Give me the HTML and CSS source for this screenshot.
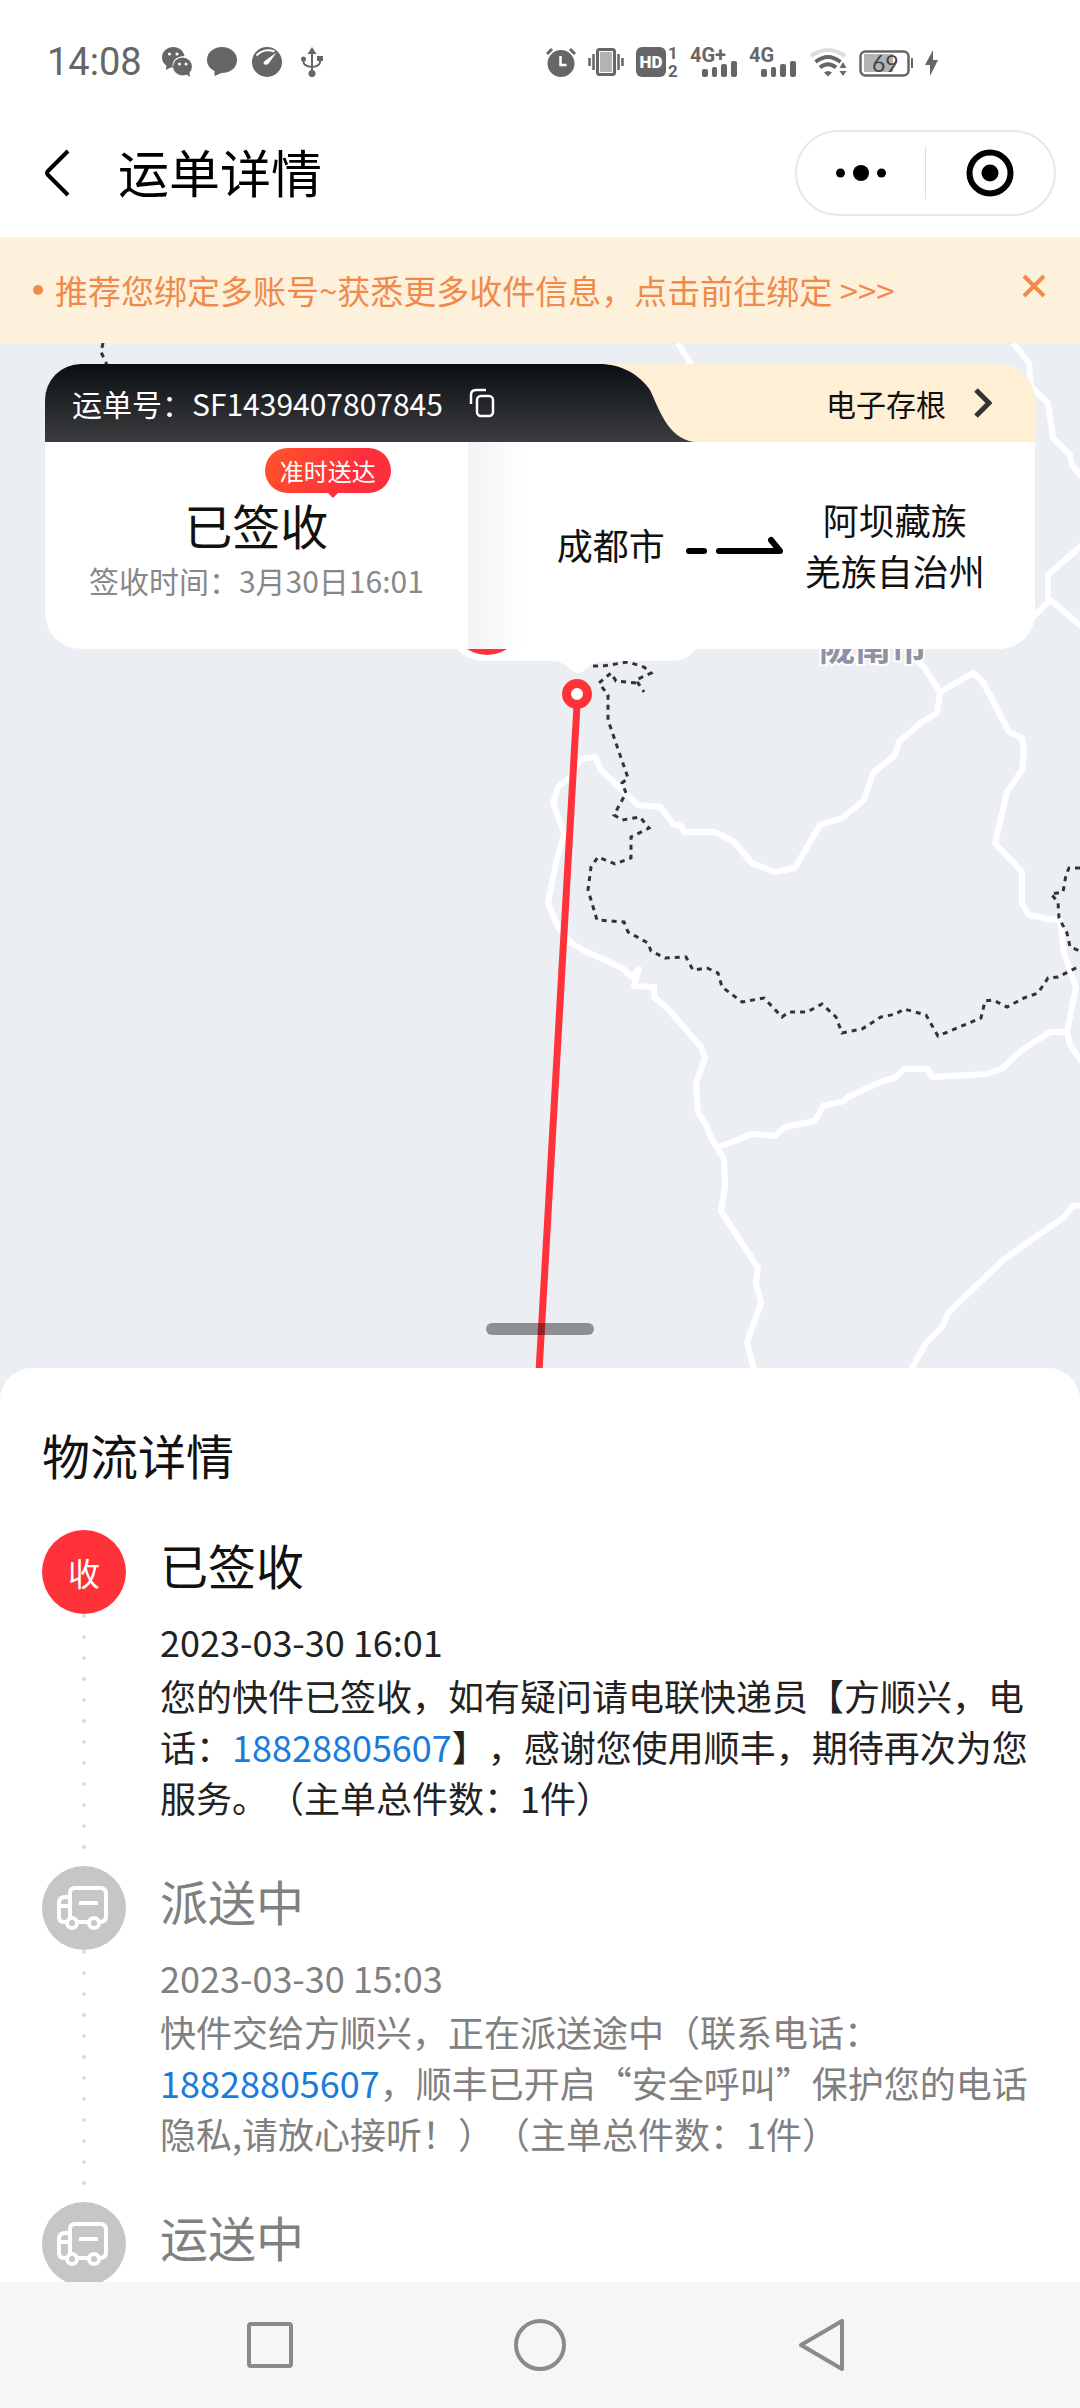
FILE: index.html
```html
<!DOCTYPE html>
<html lang="zh-CN">
<head>
    <meta charset="UTF-8">
    <meta name="viewport" content="width=device-width, initial-scale=1.0">
    <title>运单详情</title>
    <link rel="stylesheet" href="styles.css">
</head>
<body>
    <div class="status-bar">
        <div class="status-left">
            <span class="clock">14:08</span>
            <svg width="30" height="30" viewBox="0 0 30 30" fill="#666">
                <path d="M11.500 0C5 0 0 4.500 0 10.500c0 3.500 1.700 6.300 4.500 8.200L3.800 23l5-2.600 2 .3C9.500 14 14.500 9 22.500 9 21.500 3.800 17 0 11.500 0z"/>
                <ellipse cx="20.500" cy="19.500" rx="9.500" ry="9"/>
                <path d="M24 27l4 3-.8-6z"/>
                <circle cx="7.500" cy="7" r="1.600" fill="#fff"/>
                <circle cx="15" cy="7" r="1.600" fill="#fff"/>
                <circle cx="17.500" cy="17" r="1.500" fill="#fff"/>
                <circle cx="24" cy="17" r="1.500" fill="#fff"/>
            </svg>
            <svg width="30" height="30" viewBox="0 0 30 30" fill="#666">
                <path d="M15 0C6.500 0 0 5.500 0 13c0 5 2.800 8.500 7.500 11v5l7-3C24 26 30 20.500 30 13S23.500 0 15 0z"/>
            </svg>
            <svg width="30" height="30" viewBox="0 0 30 30">
                <circle cx="15" cy="15" r="15" fill="#666"/>
                <path d="M4.500 8.500C9 3.500 16 2 22.500 4.500" fill="none" stroke="#fff" stroke-width="2"/>
                <path d="M24.500 5.500L12 14.500c-1.500 3 1.500 4.500 4.500 2.300z" fill="#fff"/>
            </svg>
            <svg class="usb" width="22" height="30" viewBox="0 0 22 30" fill="#666">
                <path d="M11 0l4.500 7h-9z"/>
                <circle cx="11" cy="26.500" r="3.500"/>
                <circle cx="2.500" cy="12" r="2.500"/>
                <path d="M16 9h6v5h-6z"/>
                <path d="M11 5v20M2.500 12v3q0 4 8.500 5M19 12v3q0 4-8 5" fill="none" stroke="#666" stroke-width="2"/>
            </svg>
        </div>
        <div class="status-right">
            <svg width="30" height="30" viewBox="0 0 30 30">
                <circle cx="15" cy="16.500" r="13.500" fill="#666"/>
                <path d="M1 7l5-5M29 7l-5-5" stroke="#666" stroke-width="3"/>
                <path d="M14.500 9v9h6" fill="none" stroke="#fff" stroke-width="2.500"/>
            </svg>
            <svg width="36" height="30" viewBox="1 0 36 30" fill="none" stroke="#666">
                <rect x="13" y="5" width="12" height="20" fill="#b3b3b3" stroke="none"/>
                <rect x="10.500" y="2.500" width="17" height="25" rx="2" stroke-width="3"/>
                <path d="M6.500 7v16M31.500 7v16M2.500 11v8M35.500 11v8" stroke-width="2.500"/>
            </svg>
            <svg width="42" height="30" viewBox="0 0 42 30">
                <rect width="30" height="30" rx="6" fill="#666"/>
                <text class="hd" x="15" y="21">HD</text>
                <text class="sim" x="32" y="12">1</text>
                <text class="sim" x="32" y="30">2</text>
            </svg>
            <svg width="47" height="30" viewBox="0 0 47 30" fill="#666">
                <text class="net" x="0" y="15">4G+</text>
                <rect x="12" y="22" width="6" height="8" rx="2"/>
                <rect x="22" y="20" width="5" height="10" rx="2"/>
                <rect x="31" y="17" width="6" height="13" rx="2"/>
                <rect x="41" y="14" width="6" height="16" rx="2"/>
            </svg>
            <svg width="49" height="30" viewBox="0 0 49 30" fill="#666">
                <text class="net" x="0" y="15">4G</text>
                <rect x="12" y="22" width="6" height="8" rx="2"/>
                <rect x="22" y="20" width="5" height="10" rx="2"/>
                <rect x="31" y="17" width="6" height="13" rx="2"/>
                <rect x="41" y="14" width="6" height="16" rx="2"/>
            </svg>
            <svg width="37" height="30" viewBox="0 0 37 30" fill="none" stroke="#666" stroke-width="4">
                <path d="M1 9Q18 -3 35 9" stroke="#ddd"/>
                <path d="M5.500 15Q18 5 30.500 15M10 20.500Q18 14 26 20.500"/>
                <path d="M14 25.500q4-3 8 0l-4 4z" fill="#666" stroke="none"/>
                <path d="M33 15l3.500 6h-7zM33 29l3.500-5h-7z" fill="#666" stroke="none"/>
            </svg>
            <svg width="54" height="30" viewBox="0 0 54 30">
                <rect x="5" y="7" width="29" height="18" fill="#b3b3b3"/>
                <rect x="1.500" y="4.500" width="48" height="24" rx="5" fill="none" stroke="#666" stroke-width="2.500"/>
                <path d="M53 11v10" stroke="#666" stroke-width="2"/>
                <text class="battery" x="13" y="25">69</text>
            </svg>
            <svg width="13" height="30" viewBox="0 0 13 30" fill="#666">
                <path d="M8 3L0 18h5v11l8-16H8z"/>
            </svg>
        </div>
    </div>

    <header class="nav-header">
        <button class="back" aria-label="返回">
            <svg width="26" height="48" viewBox="0 0 26 48" fill="none" stroke="#000" stroke-width="4">
                <path d="M24 2L4 22q-2 2 0 4l20 20"/>
            </svg>
        </button>
        <h1>运单详情</h1>
        <div class="capsule">
            <button aria-label="更多">
                <svg width="50" height="20" viewBox="0 0 50 20">
                    <circle cx="4.500" cy="10" r="4.500"/>
                    <circle cx="25" cy="10" r="8"/>
                    <circle cx="45.500" cy="10" r="4.500"/>
                </svg>
            </button>
            <button aria-label="关闭">
                <svg width="48" height="48" viewBox="0 0 48 48">
                    <circle cx="24" cy="24" r="20.500" fill="none" stroke="#000" stroke-width="6"/>
                    <circle cx="24" cy="24" r="8.500"/>
                </svg>
            </button>
        </div>
    </header>

    <div class="notice">
        <span class="notice-dot"></span>
        <a href="#bind">推荐您绑定多账号~获悉更多收件信息，点击前往绑定 &gt;&gt;&gt;</a>
        <button aria-label="关闭提示">
            <svg width="24" height="24" viewBox="0 0 24 24" stroke="#f08a4b" stroke-width="4">
                <path d="M2 2l20 20M22 2L2 22"/>
            </svg>
        </button>
    </div>

    <main>
        <section class="map">
            <svg class="map-canvas" viewBox="0 343 1080 1025" preserveAspectRatio="xMidYMid slice">
                <!-- roads -->
                <g class="road">
                    <path d="M678 343L692 366"/>
                    <path d="M1013 343L1029 363 1031 387 1048 403 1053 438 1070 455 1072 465 1082 477"/>
                    <path d="M1082 545L1048 575V602L1030 620M1049 599L1082 627"/>
                    <path d="M905 650L924 667 940 692 937 713 922 722 899 742 895 755 873 773 864 800 842 818 820 825 795 868 775 872 752 863 733 841 715 832H684L681 826 673 824 660 807 638 805 601 770 595 757 581 759 570 777 558 787 553 803 564 833 556 863 548 903 558 927 571 943 583 950 622 968 632 977 639 969 634 986 654 987V997L669 1010 701 1047 705 1058 696 1083 698 1112 707 1127 711 1138 724 1159 725 1187 721 1211 758 1268 756 1283 761 1303 747 1342 754 1370"/>
                    <path d="M940 692L973 673 983 682 1009 732 1022 738 1024 752 1022 770 1007 792 995 843 1022 872 1022 903 1029 915 1048 919 1060 920 1064 953 1076 987 1067 1032 1070 1045 1082 1062"/>
                    <path d="M1067 1032H1050L1022 1050 1003 1068 987 1074 932 1077 928 1069H904L895 1078 883 1081 848 1097 844 1101 823 1106 815 1121 785 1127 775 1136 752 1134 735 1141 718 1147"/>
                    <path d="M1082 1205L1073 1206 1064 1217 1003 1260 948 1313 942 1327 926 1343 911 1370"/>
                </g>
                <!-- province borders -->
                <g class="border">
                    <path d="M103 343L101 352 107 365"/>
                    <path d="M593 666H603L628 662 644 667 651 673 636 680 644 692"/>
                    <path d="M636 683L616 681 611 673 599 683 608 695V720L628 778 622 783 626 793 614 815 622 820 640 817 649 828 631 837V858L615 864 598 857 591 867 588 890 597 920 624 922 628 932 648 943 651 951 665 958 686 957 693 970 707 968 718 973 722 987 742 1002 764 998 782 1017 789 1012H807L822 1004 836 1017 842 1033 862 1029 881 1017 896 1014 904 1009 926 1015 938 1036 981 1018 985 1001 993 1000 1007 1007 1024 998 1038 993 1048 978 1058 977 1080 966"/>
                    <path d="M1080 868H1069L1066 875 1063 892 1051 894 1058 902 1059 918 1067 933 1070 947 1080 951"/>
                </g>
                <text class="city" x="819" y="661">陇南市</text>
                <!-- callout above the destination -->
                <path d="M445 600V625Q455 661 485 661H552C566 661 571 673 578 673S590 661 604 661H670Q700 661 706 625V600z" fill="#fff"/>
                <circle cx="487" cy="619" r="36" fill="#ff323a"/>
                <path d="M577 705L539 1372" stroke="#ff323a" stroke-width="7"/>
                <circle cx="577" cy="694" r="10.500" fill="#fff" stroke="#ff323a" stroke-width="9"/>
            </svg>

            <div class="card">
                <div class="card-head">
                    <div class="waybill">
                        <span>运单号：SF1439407807845</span>
                        <button aria-label="复制">
                            <svg width="26" height="30" viewBox="0 0 26 30" fill="none" stroke="#fff" stroke-width="2.500">
                                <path d="M2 16V7q0-5 5-5h10"/>
                                <rect x="8" y="8" width="16" height="20" rx="4"/>
                            </svg>
                        </button>
                    </div>
                    <svg class="tab-curve" width="95" height="78" viewBox="0 0 95 78">
                        <defs>
                            <linearGradient id="tab" x1="0" y1="0" x2="0" y2="1">
                                <stop offset="0" stop-color="#0b0f13"/>
                                <stop offset="1" stop-color="#3b3c3f"/>
                            </linearGradient>
                        </defs>
                        <path d="M0 0C22 0 40 10 51 26C60 44 68 74 95 78H0z" fill="url(#tab)"/>
                    </svg>
                    <button class="receipt">
                        电子存根
                        <svg width="18" height="30" viewBox="0 0 18 30" fill="none" stroke="#333" stroke-width="5">
                            <path d="M2 2l13 13L2 28"/>
                        </svg>
                    </button>
                </div>
                <div class="card-body">
                    <div class="sign">
                        <span class="badge">准时送达</span>
                        <h2>已签收</h2>
                        <p>签收时间：3月30日16:01</p>
                    </div>
                    <div class="route">
                        <span>成都市</span>
                        <svg width="100" height="36" viewBox="0 0 100 36" fill="none" stroke="#000" stroke-width="6" stroke-linecap="round" stroke-linejoin="round">
                            <path d="M4 24h15M34 24h61L86 13"/>
                        </svg>
                        <span>阿坝藏族<br>羌族自治州</span>
                    </div>
                </div>
            </div>
            <div class="handle"></div>
        </section>

        <section class="sheet">
            <h2>物流详情</h2>
            <ol class="timeline">
                <li class="current">
                    <div class="rail">
                        <span class="node">收</span>
                    </div>
                    <div class="event">
                        <h3>已签收</h3>
                        <time>2023-03-30 16:01</time>
                        <p>您的快件已签收，如有疑问请电联快递员【方顺兴，电话：<a href="tel:18828805607">18828805607</a>】，感谢您使用顺丰，期待再次为您服务。（主单总件数：1件）</p>
                    </div>
                </li>
                <li>
                    <div class="rail">
                        <span class="node">
                            <svg width="84" height="84" viewBox="0 0 84 84" fill="none" stroke="#fff" stroke-width="4">
                                <path d="M25 56h-3q-5 0-5-5V37q0-6 6-6h5M17 40h11M28 52V27q0-5 5-5h25q6 0 6 6v22q0 6-6 6M36 56h10"/>
                                <path d="M37 37h19"/>
                                <circle cx="30" cy="57" r="5"/>
                                <circle cx="52" cy="57" r="5"/>
                            </svg>
                        </span>
                    </div>
                    <div class="event">
                        <h3>派送中</h3>
                        <time>2023-03-30 15:03</time>
                        <p>快件交给方顺兴，正在派送途中（联系电话：<a href="tel:18828805607">18828805607</a>，顺丰已开启“安全呼叫”保护您的电话隐私,请放心接听！）（主单总件数：1件）</p>
                    </div>
                </li>
                <li>
                    <div class="rail">
                        <span class="node">
                            <svg width="84" height="84" viewBox="0 0 84 84" fill="none" stroke="#fff" stroke-width="4">
                                <path d="M25 56h-3q-5 0-5-5V37q0-6 6-6h5M17 40h11M28 52V27q0-5 5-5h25q6 0 6 6v22q0 6-6 6M36 56h10"/>
                                <path d="M37 37h19"/>
                                <circle cx="30" cy="57" r="5"/>
                                <circle cx="52" cy="57" r="5"/>
                            </svg>
                        </span>
                    </div>
                    <div class="event">
                        <h3>运送中</h3>
                    </div>
                </li>
            </ol>
        </section>
    </main>

    <nav class="system-nav">
        <button aria-label="最近任务">
            <svg width="52" height="52" viewBox="0 0 52 52" fill="none" stroke="#8a8a8a" stroke-width="4">
                <rect x="5" y="5" width="42" height="42" rx="2"/>
            </svg>
        </button>
        <button aria-label="主屏幕">
            <svg width="52" height="52" viewBox="0 0 52 52" fill="none" stroke="#8a8a8a" stroke-width="4">
                <circle cx="26" cy="26" r="24"/>
            </svg>
        </button>
        <button aria-label="返回上一页">
            <svg width="72" height="52" viewBox="0 0 72 52" fill="none" stroke="#8a8a8a" stroke-width="4" stroke-linejoin="round">
                <path d="M68 2v48L27 26z"/>
            </svg>
        </button>
    </nav>
</body>
</html>
```
FILE: styles.css
```css
* {
    box-sizing: border-box;
}

body {
    margin: 0;
    height: 100vh;
    display: flex;
    flex-direction: column;
    font-family: "Noto Sans CJK SC", "Noto Sans", sans-serif;
    font-size: 36px;
    color: #111;
    background-color: #fff;
    text-spacing-trim: space-all;
}

h1, h2, h3, p, ol {
    margin: 0;
    padding: 0;
    font-weight: 400;
}

button {
    display: flex;
    align-items: center;
    justify-content: center;
    padding: 0;
    border: none;
    background: none;
    font: inherit;
    color: inherit;
    cursor: pointer;
}

a {
    text-decoration: none;
}

svg {
    display: block;
    flex-shrink: 0;
}

/* phone status bar */
.status-bar {
    display: flex;
    justify-content: space-between;
    align-items: center;
    flex-shrink: 0;
    height: 109px;
    padding: 14px 142px 0 47px;
}

.status-left {
    display: flex;
    align-items: center;
    gap: 15px;
}

.clock {
    font-family: Roboto, sans-serif;
    font-size: 38px;
    line-height: 44px;
    color: #666;
    margin-right: 5px;
}

.usb {
    margin-left: 4px;
}

.status-right {
    display: flex;
    gap: 12px;
}

.status-right svg {
    overflow: visible;
}

.hd, .sim, .net, .battery {
    font-family: Roboto, sans-serif;
    fill: #666;
}

.hd {
    font-size: 17px;
    font-weight: 900;
    text-anchor: middle;
    fill: #fff;
}

.sim {
    font-size: 17px;
    font-weight: 700;
}

.net {
    font-size: 20px;
    font-weight: 700;
}

.battery {
    font-family: Lato, sans-serif;
    font-size: 23px;
    fill: #444;
}

/* header */
.nav-header {
    display: flex;
    align-items: center;
    flex-shrink: 0;
    height: 128px;
    padding: 0 24px 0 44px;
    color: #000;
}

.nav-header h1 {
    flex: 1;
    margin-left: 48px;
    padding-bottom: 4px;
    font-size: 51px;
    line-height: 74px;
}

.capsule {
    display: flex;
    align-items: center;
    width: 261px;
    height: 86px;
    border: 2px solid #e8e8e8;
    border-radius: 43px;
}

.capsule button {
    flex: 1;
    height: 52px;
}

.capsule button + button {
    border-left: 1px solid #ddd;
}

/* notice strip */
.notice {
    display: flex;
    align-items: center;
    flex-shrink: 0;
    height: 106px;
    padding: 0 34px 0 33px;
    background-color: #fdf1dc;
}

.notice-dot {
    width: 10px;
    height: 10px;
    border-radius: 50%;
    background-color: #f08a4b;
}

.notice a {
    flex: 1;
    margin-left: 12px;
    font-size: 33px;
    line-height: 48px;
    color: #f08a4b;
}

.notice button {
    padding-bottom: 8px;
}

main {
    flex: 1;
    min-height: 0;
    overflow: hidden;
    background-color: #ebeef3;
}

/* map */
.map {
    position: relative;
    height: 1025px;
    padding: 21px 45px 0;
}

.map-canvas {
    position: absolute;
    inset: 0;
    width: 100%;
    height: 100%;
}

.road {
    fill: none;
    stroke: #fff;
    stroke-width: 6;
    stroke-linejoin: round;
}

.border {
    fill: none;
    stroke: #333;
    stroke-width: 3;
    stroke-dasharray: 5 5;
}

.city {
    font-size: 36px;
    font-weight: 700;
    fill: #8e92a2;
    stroke: #fff;
    stroke-width: 4;
    paint-order: stroke;
}

.handle {
    position: absolute;
    bottom: 33px;
    left: 50%;
    width: 108px;
    height: 12px;
    margin-left: -54px;
    border-radius: 6px;
    background-color: rgba(0, 0, 0, 0.4);
}

/* waybill card */
.card {
    position: relative;
    border-radius: 36px;
    overflow: hidden;
    background-color: #fff;
}

.card-head {
    display: flex;
    height: 78px;
    font-size: 30px;
    background-color: #ffefd4;
}

.waybill {
    display: flex;
    align-items: center;
    gap: 26px;
    width: 56%;
    padding-left: 27px;
    color: #fff;
    background: linear-gradient(#0b0f13, #3b3c3f);
}

.receipt {
    flex: 1;
    justify-content: flex-end;
    gap: 28px;
    padding-right: 43px;
}

.card-body {
    display: flex;
}

.sign {
    position: relative;
    width: 42.7%;
    padding: 52px 0 43px;
    text-align: center;
}

.sign h2 {
    font-size: 48px;
    line-height: 60px;
}

.sign p {
    font-size: 30px;
    line-height: 52px;
    color: #888;
}

.badge {
    position: absolute;
    top: 6px;
    left: 52%;
    padding: 0 15px;
    border-radius: 23px;
    font-size: 24px;
    line-height: 45px;
    color: #fff;
    background: linear-gradient(120deg, #ff5428, #ff2e3d 70%);
}

.badge::after {
    content: "";
    position: absolute;
    top: 45px;
    left: 50%;
    border: 5px solid transparent;
    border-top-color: #ff3238;
    border-bottom: none;
}

.route {
    flex: 1;
    display: flex;
    align-items: center;
    justify-content: center;
    gap: 20px;
    padding: 0 0 2px 39px;
    line-height: 51px;
    text-align: center;
    background: linear-gradient(90deg, #f3f3f3, #fff 60px);
}

/* logistics sheet */
.sheet {
    padding: 50px 42px 0;
    border-radius: 32px 32px 0 0;
    background-color: #fff;
}

.sheet h2 {
    margin-bottom: 40px;
    font-size: 48px;
    line-height: 72px;
}

.timeline {
    list-style: none;
}

.timeline li {
    display: flex;
    gap: 34px;
    color: #808080;
}

.timeline .current {
    color: #222;
}

.rail {
    flex-shrink: 0;
    width: 84px;
    background: radial-gradient(circle at 50% 2px, #ddd 2px, transparent 2px) 0 0 / 84px 21px;
}

.node {
    display: flex;
    align-items: center;
    justify-content: center;
    width: 84px;
    height: 84px;
    border-radius: 50%;
    background-color: #c6c6c6;
}

.current .node {
    font-size: 32px;
    color: #fff;
    background-color: #ff323a;
}

.event {
    padding-bottom: 43px;
}

.event h3 {
    margin-bottom: 16px;
    font-size: 48px;
    line-height: 68px;
}

.current h3 {
    color: #111;
}

.event time {
    display: block;
    margin-bottom: 2px;
    line-height: 54px;
}

.event p {
    line-height: 51px;
}

.event a {
    color: #1a7bd9;
}

/* system navigation */
.system-nav {
    display: flex;
    flex-shrink: 0;
    height: 126px;
    padding: 0 12.5%;
    background-color: #f6f6f6;
}

.system-nav button {
    flex: 1;
}
```
